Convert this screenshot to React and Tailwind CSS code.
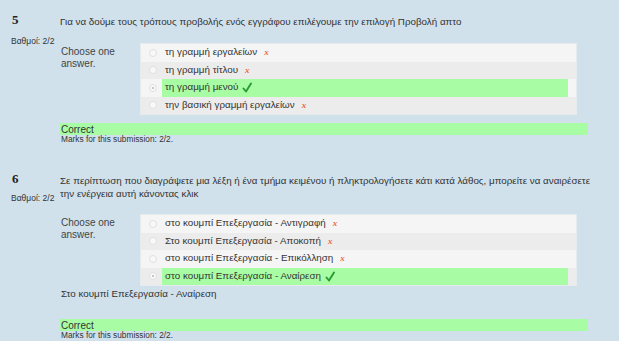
import React from 'react'

const questions = [
  {
    num: '5',
    text: 'Για να δούμε τους τρόπους προβολής ενός εγγράφου επιλέγουμε την επιλογή Προβολή απτο',
    answers: [
      { label: 'τη γραμμή εργαλείων', correct: false },
      { label: 'τη γραμμή τίτλου', correct: false },
      { label: 'τη γραμμή μενού', correct: true, checked: true },
      { label: 'την βασική γραμμή εργαλείων', correct: false },
    ],
  },
  {
    num: '6',
    text: 'Σε περίπτωση που διαγράψετε μια λέξη ή ένα τμήμα κειμένου ή πληκτρολογήσετε κάτι κατά λάθος, μπορείτε να αναιρέσετε την ενέργεια αυτή κάνοντας κλικ',
    answers: [
      { label: 'στο κουμπί Επεξεργασία - Αντιγραφή', correct: false },
      { label: 'Στο κουμπί Επεξεργασία - Αποκοπή', correct: false },
      { label: 'στο κουμπί Επεξεργασία - Επικόλληση', correct: false },
      { label: 'στο κουμπί Επεξεργασία - Αναίρεση', correct: true, checked: true },
    ],
    feedback: 'Στο κουμπί Επεξεργασία - Αναίρεση',
  },
]

function Radio({ checked }) {
  return (
    <span className="w-[8px] h-[8px] rounded-full border border-[#e0e0e0] bg-[#f8f8f8] flex items-center justify-center">
      {checked && <span className="w-[2px] h-[2px] rounded-full bg-[#b5b5b5]" />}
    </span>
  )
}

function Mark({ correct }) {
  if (correct) {
    return (
      <svg width="10" height="11" viewBox="0 0 10 11" className="ml-[4px]">
        <path d="M1.5 6.5 L4 9.5 L9 1.5" fill="none" stroke="#2a9a32" strokeWidth="1.9" strokeLinecap="round" strokeLinejoin="round" />
      </svg>
    )
  }
  return <span className="ml-[7px] text-[9px] italic font-bold font-['Liberation_Serif'] text-[#ea6a45]">x</span>
}

function Question({ q, first }) {
  return (
    <div className={`flex ${first ? 'pt-[13px]' : 'pt-[28px]'}`}>
      <div className="w-[60px] shrink-0 pl-[11px]">
        <div className="font-['Liberation_Serif'] font-bold text-[13px] leading-[14px] text-[#222] pl-[1px]">{q.num}</div>
        <div className={`text-[8.5px] leading-[10px] ${first ? 'mt-[9px]' : 'mt-[7px]'} text-[#333]`}>Βαθμοί: 2/2</div>
      </div>
      <div className="flex-1">
        <div className="w-[545px] text-[9.8px] leading-[13px] pt-[2px] text-[#333]">{q.text}</div>
        <div className={`flex ${first ? 'mt-[15px]' : 'mt-[14px]'}`}>
          <div className="w-[80px] shrink-0 pl-[1px] pt-[3px] text-[10px] leading-[12px] text-[#444]">
            Choose one<br />answer.
          </div>
          <div className="w-[437px] border border-[#e6ebee]">
            {q.answers.map((a, i) => (
              <div key={i} className={`flex items-center h-[17.5px] ${i % 2 === 0 ? 'bg-[#f5f5f5]' : 'bg-[#ececec]'}`}>
                <div className="w-[21px] shrink-0 flex justify-center pl-[2px]">
                  <Radio checked={a.checked} />
                </div>
                <div className={`flex-1 mr-[8px] h-full flex items-center pl-[3px] text-[9.8px] text-[#333] ${a.checked ? 'bg-[#a8fda4]' : ''}`}>
                  {a.label}
                  <Mark correct={a.correct} />
                </div>
              </div>
            ))}
          </div>
        </div>
        {q.feedback && (
          <div className="text-[9.8px] leading-[12px] mt-[2px] pl-[1px] text-[#333]">{q.feedback}</div>
        )}
        <div className={`${q.feedback ? 'mt-[19px]' : 'mt-[8px]'} w-[528px] bg-[#a8fda4] h-[12px] flex items-center pl-[1px] text-[10px] text-[#333]`}>
          Correct
        </div>
        <div className="text-[8.3px] leading-[9px] pl-[1px] text-[#333]">Marks for this submission: 2/2.</div>
      </div>
    </div>
  )
}

export default function App() {
  return (
    <div className="w-[619px] h-[341px] overflow-hidden bg-[#d0e1ec] font-['Liberation_Sans',Arial,sans-serif]">
      {questions.map((q, i) => (
        <Question key={q.num} q={q} first={i === 0} />
      ))}
    </div>
  )
}
